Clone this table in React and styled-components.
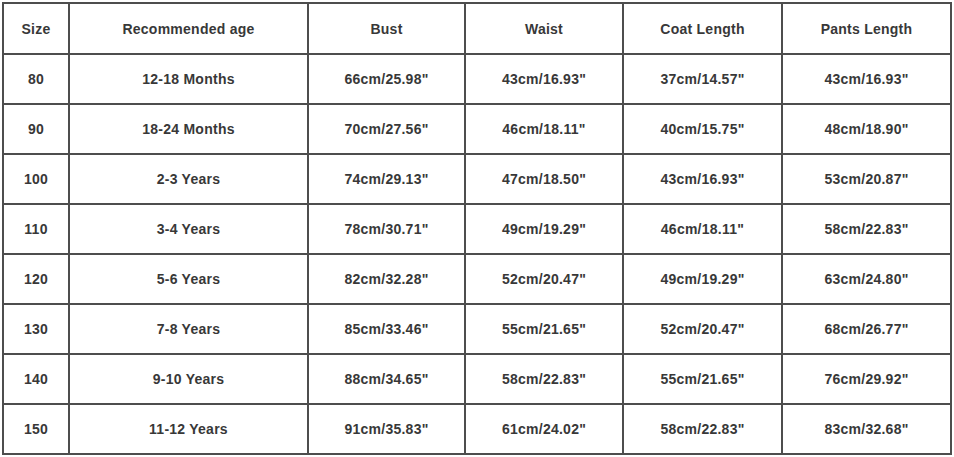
import React from 'react';
import styled, { createGlobalStyle } from 'styled-components';

const GlobalStyle = createGlobalStyle`
  html, body {
    margin: 0;
    padding: 0;
    background: #ffffff;
  }
  body {
    font-family: 'Liberation Sans', Arial, sans-serif;
  }
`;

const Page = styled.div`
  padding: 2px 0 0 2px;
`;

const Table = styled.table`
  table-layout: fixed;
  width: 950px;
  border-collapse: separate;
  border-spacing: 2px;
  background: #4d4d4d;
`;

const Cell = styled.td`
  background: #fff;
  padding: 0;
  height: ${(p) => (p.$head ? 49 : 48)}px;
  text-align: center;
  vertical-align: middle;
  font-size: 14px;
  font-weight: bold;
  letter-spacing: 0.25px;
  color: #383838;
  white-space: nowrap;
`;

const widths = [64, 237, 155, 156, 157, 167];

const headers = ['Size', 'Recommended age', 'Bust', 'Waist', 'Coat Length', 'Pants Length'];

const rows = [
  ['80', '12-18 Months', '66cm/25.98"', '43cm/16.93"', '37cm/14.57"', '43cm/16.93"'],
  ['90', '18-24 Months', '70cm/27.56"', '46cm/18.11"', '40cm/15.75"', '48cm/18.90"'],
  ['100', '2-3 Years', '74cm/29.13"', '47cm/18.50"', '43cm/16.93"', '53cm/20.87"'],
  ['110', '3-4 Years', '78cm/30.71"', '49cm/19.29"', '46cm/18.11"', '58cm/22.83"'],
  ['120', '5-6 Years', '82cm/32.28"', '52cm/20.47"', '49cm/19.29"', '63cm/24.80"'],
  ['130', '7-8 Years', '85cm/33.46"', '55cm/21.65"', '52cm/20.47"', '68cm/26.77"'],
  ['140', '9-10 Years', '88cm/34.65"', '58cm/22.83"', '55cm/21.65"', '76cm/29.92"'],
  ['150', '11-12 Years', '91cm/35.83"', '61cm/24.02"', '58cm/22.83"', '83cm/32.68"'],
];

export default function App() {
  return (
    <Page>
      <GlobalStyle />
      <Table>
        <colgroup>
          {widths.map((w, i) => (
            <col key={i} style={{ width: w }} />
          ))}
        </colgroup>
        <tbody>
          <tr>
            {headers.map((h) => (
              <Cell key={h} $head>{h}</Cell>
            ))}
          </tr>
          {rows.map((r) => (
            <tr key={r[0]}>
              {r.map((v, i) => (
                <Cell key={i}>{v}</Cell>
              ))}
            </tr>
          ))}
        </tbody>
      </Table>
    </Page>
  );
}
